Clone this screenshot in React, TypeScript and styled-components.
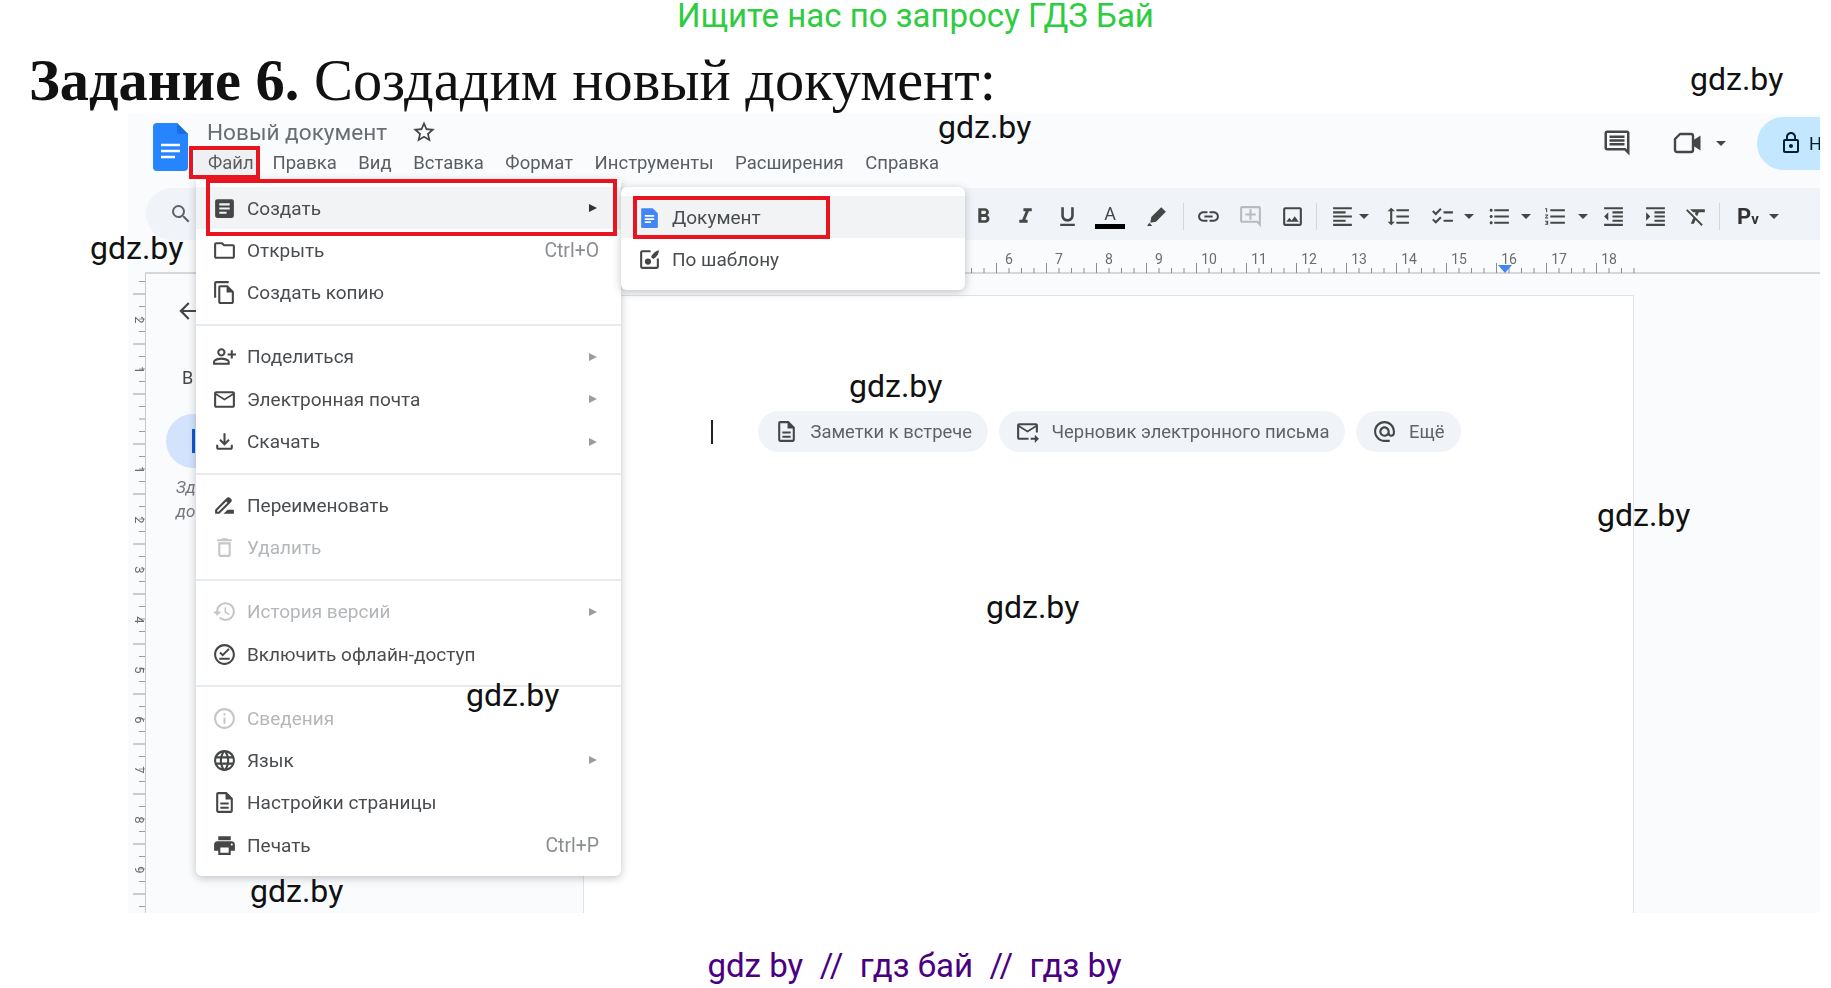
import { ReactNode } from "react";
import styled, { createGlobalStyle } from "styled-components";
import {
  MdAlternateEmail,
  MdArrowBack,
  MdArticle,
  MdChecklist,
  MdDriveFileRenameOutline,
  MdFormatAlignLeft,
  MdFormatBold,
  MdFormatClear,
  MdFormatIndentDecrease,
  MdFormatIndentIncrease,
  MdFormatItalic,
  MdFormatLineSpacing,
  MdFormatListBulleted,
  MdFormatListNumbered,
  MdFormatUnderlined,
  MdHistory,
  MdInfoOutline,
  MdLanguage,
  MdLink,
  MdLockOutline,
  MdOutlineAddComment,
  MdOutlineComment,
  MdOutlineDelete,
  MdOutlineDescription,
  MdOutlineEmail,
  MdOutlineFileCopy,
  MdOutlineFileDownload,
  MdOutlineFolder,
  MdOutlineForwardToInbox,
  MdOutlineImage,
  MdOutlineOfflinePin,
  MdOutlinePersonAddAlt,
  MdPrint,
  MdSearch,
  MdStarBorder,
} from "react-icons/md";

const Global = createGlobalStyle`
  html, body {
    margin: 0;
    padding: 0;
    background: #fff;
    font-family: Roboto, "Liberation Sans", sans-serif;
  }
`;

const Sheet = styled.div`
  position: relative;
  width: 1831px;
  height: 988px;
  overflow: hidden;
  display: flex;
  flex-direction: column;
`;

const Banner = styled.div`
  height: 32px;
  line-height: 32px;
  text-align: center;
  font-size: 33px;
  color: #2ecc40;
`;

const Heading = styled.h1`
  margin: 0;
  height: 82px;
  padding: 18px 0 0 29px;
  box-sizing: border-box;
  font: 400 58.4px/62px "Liberation Serif", serif;
  color: #111;
  white-space: nowrap;
  b {
    font-weight: 700;
  }
`;

const Footer = styled.div`
  margin-top: 35px;
  padding-right: 2px;
  line-height: 36px;
  font-size: 33.1px;
  text-align: center;
  color: #4b0082;
  white-space: pre;
`;

const Mark = styled.div<{ $x: number; $y: number }>`
  position: absolute;
  left: ${({ $x }) => $x}px;
  top: ${({ $y }) => $y - 19}px;
  font-size: 32px;
  line-height: 38px;
  color: #111;
`;

const Shot = styled.div`
  position: relative;
  margin-left: 128px;
  width: 1692px;
  height: 799px;
  flex: none;
  overflow: hidden;
  background: #f9fbfd;
  color: #444746;
  filter: blur(0.45px);
`;

const TitleBar = styled.div`
  height: 74px;
  display: flex;
  padding-left: 25px;
`;

const DocsLogo = styled.svg`
  width: 35px;
  height: 48px;
  margin: 9px 19px 0 0;
  flex: none;
`;

const TitleColumn = styled.div`
  display: flex;
  flex-direction: column;
  padding-top: 5px;
`;

const TitleRow = styled.div`
  display: flex;
  align-items: center;
  height: 26px;
  font-size: 22.6px;
  color: #6a6e72;
  gap: 24px;
  svg {
    font-size: 26px;
    color: #444746;
  }
`;

const MenuBar = styled.div`
  display: flex;
  gap: 21.5px;
  margin-top: 5px;
  font-size: 18.5px;
  line-height: 26px;
  color: #5a5e62;
`;

const HiddenTab = styled.span`
  width: 44px;
`;

const TitleActions = styled.div`
  margin-left: auto;
  display: flex;
  align-items: center;
  align-self: flex-start;
  height: 58px;
  font-size: 30px;
  color: #444746;
  svg {
    flex: none;
  }
`;

const ActionIcon = styled.div<{ $mr: number }>`
  display: flex;
  margin-right: ${({ $mr }) => $mr}px;
`;

const SharePill = styled.div`
  width: 120px;
  height: 53px;
  margin-left: 29px;
  margin-right: -57px;
  border-radius: 27px;
  background: #c2e7ff;
  display: flex;
  align-items: center;
  padding-left: 22px;
  box-sizing: border-box;
  gap: 6px;
  font-size: 18px;
  color: #001d35;
  svg {
    font-size: 24px;
  }
`;

const Toolbar = styled.div`
  height: 52px;
  margin-left: 18px;
  padding: 0 39px 0 23px;
  border-radius: 26px 0 0 26px;
  background: #f0f4f9;
  display: flex;
  align-items: center;
`;

const SearchGlyph = styled(MdSearch)`
  font-size: 24px;
  color: #5f6368;
`;

const ToolSet = styled.div`
  margin-left: auto;
  padding-top: 4px;
  display: flex;
  align-items: center;
`;

const Tool = styled.div<{ $w: number; $ml?: number; $faded?: boolean }>`
  width: ${({ $w }) => $w}px;
  margin-left: ${({ $ml }) => $ml ?? 0}px;
  display: flex;
  justify-content: center;
  font-size: 25px;
  color: ${({ $faded }) => ($faded ? "#b8bbbe" : "#444746")};
`;

const ToolSep = styled.div`
  width: 1px;
  height: 27px;
  background: #d5d8db;
  margin: 0 3px;
`;

const Caret = styled.div`
  width: 14px;
  display: flex;
  justify-content: center;
  &::after {
    content: "";
    border-left: 5px solid transparent;
    border-right: 5px solid transparent;
    border-top: 5px solid #444746;
  }
`;

const ColorA = styled.div`
  width: 30px;
  display: flex;
  flex-direction: column;
  align-items: center;
  font-size: 18px;
  line-height: 20px;
  color: #444746;
  &::after {
    content: "";
    width: 30px;
    height: 5px;
    background: #000;
  }
`;

const PvText = styled.div`
  font-size: 22px;
  font-weight: 700;
  color: #333;
  small {
    font-size: 15px;
  }
`;

const RulerSvg = styled.svg`
  display: block;
  width: 1692px;
  height: 34px;
`;

const Workspace = styled.div`
  display: flex;
  height: 639px;
`;

const VRulerSvg = styled.svg`
  width: 17px;
  height: 639px;
  flex: none;
  overflow: visible;
`;

const SidePanel = styled.div`
  width: 438px;
  flex: none;
  box-sizing: border-box;
  border-left: 1px solid #c8cbce;
  padding: 24px 0 0 20px;
  color: #444746;
`;

const BackIcon = styled(MdArrowBack)`
  font-size: 26px;
  display: block;
  margin-left: 9px;
`;

const TabsLabel = styled.div`
  margin: 42px 0 0 16px;
  font-size: 18px;
  line-height: 24px;
`;

const TabPill = styled.div`
  width: 300px;
  height: 54px;
  margin-top: 24px;
  border-radius: 27px;
  background: #d3e3fd;
  display: flex;
  align-items: center;
  padding-left: 26px;
  box-sizing: border-box;
  &::before {
    content: "";
    width: 3px;
    height: 24px;
    background: #0b57d0;
  }
`;

const EmptyHint = styled.div`
  margin: 7px 0 0 10px;
  font-size: 17px;
  font-style: italic;
  line-height: 24px;
  color: #75787c;
`;

const DocPage = styled.div`
  width: 1051px;
  margin-top: 21px;
  box-sizing: border-box;
  background: #fff;
  border: 1px solid #e0e2e4;
  border-bottom: none;
  padding: 115px 0 0 127px;
`;

const TemplateRow = styled.div`
  display: flex;
  align-items: center;
`;

const Cursor = styled.div`
  width: 2px;
  height: 24px;
  background: #222;
  margin-right: 45px;
`;

const Chip = styled.div`
  height: 41px;
  margin-right: 11px;
  padding: 0 16px 0 16px;
  border-radius: 21px;
  background: #f0f4f9;
  display: flex;
  align-items: center;
  gap: 11.5px;
  font-size: 18.4px;
  color: #5f6368;
  svg {
    font-size: 25px;
    color: #444746;
  }
`;

const FileMenu = styled.div`
  position: absolute;
  left: 68px;
  top: 66px;
  width: 425px;
  box-sizing: border-box;
  padding: 7px 0 10px;
  background: #fff;
  border-radius: 0 0 6px 6px;
  box-shadow: 0 2px 8px rgba(60, 64, 67, 0.3);
`;

const SubMenu = styled.div`
  position: absolute;
  left: 493px;
  top: 73px;
  width: 344px;
  box-sizing: border-box;
  padding: 9px 0;
  background: #fff;
  border-radius: 6px;
  box-shadow: 0 2px 8px rgba(60, 64, 67, 0.3);
`;

const Row = styled.div<{ $hot?: boolean; $off?: boolean }>`
  height: 42.4px;
  padding: 0 22px 0 16px;
  display: flex;
  align-items: center;
  gap: 10px;
  font-size: 19px;
  background: ${({ $hot }) => ($hot ? "#f1f3f4" : "transparent")};
  color: ${({ $off }) => ($off ? "#b4b7ba" : "#4a4d50")};
  svg {
    font-size: 25px;
    flex: none;
    color: ${({ $off }) => ($off ? "#c4c7c9" : "#444746")};
  }
`;

const RowLabel = styled.span`
  flex: 1;
`;

const Shortcut = styled.span`
  color: #8a8d90;
  font-size: 19.4px;
`;

const SubArrow = styled.span<{ $dark?: boolean }>`
  margin-right: 2px;
  border-top: 4.5px solid transparent;
  border-bottom: 4.5px solid transparent;
  border-left: 8px solid ${({ $dark }) => ($dark ? "#333" : "#9a9da0")};
`;

const Divider = styled.div`
  height: 21.5px;
  display: flex;
  align-items: center;
  &::after {
    content: "";
    width: 100%;
    height: 2px;
    background: #e9eaeb;
  }
`;

const RedBox = styled.div<{ $x: number; $y: number; $w: number; $h: number }>`
  position: absolute;
  left: ${({ $x }) => $x}px;
  top: ${({ $y }) => $y}px;
  width: ${({ $w }) => $w}px;
  height: ${({ $h }) => $h}px;
  box-sizing: border-box;
  border: 4.5px solid #e8141f;
`;

const FileTab = styled.div`
  position: absolute;
  left: 67px;
  top: 37px;
  width: 61px;
  height: 24px;
  background: #eef0f1;
  padding-left: 13px;
  box-sizing: border-box;
  font-size: 18.5px;
  line-height: 25px;
  color: #5a5e62;
`;

const marks = [
  [1690, 79],
  [938, 127],
  [90, 248],
  [849, 386],
  [1597, 515],
  [986, 607],
  [466, 695],
  [250, 891],
];

const menuItems = ["Правка", "Вид", "Вставка", "Формат", "Инструменты", "Расширения", "Справка"];

const DocsMark = () => (
  <svg width="1em" height="1em" viewBox="0 0 24 24">
    <path d="M5 3h10l5 5v13a1 1 0 0 1-1 1H5a1 1 0 0 1-1-1V4a1 1 0 0 1 1-1z" fill="#4285f4" />
    <path d="M7.5 10.5h9M7.5 13.5h9M7.5 16.5h6" stroke="#fff" strokeWidth="1.6" />
  </svg>
);

const TemplateIcon = () => (
  <svg viewBox="0 0 24 24" width="1em" height="1em" fill="none">
    <path d="M13 4H5a1 1 0 0 0-1 1v14a1 1 0 0 0 1 1h14a1 1 0 0 0 1-1v-8" stroke="currentColor" strokeWidth="2" />
    <path d="M21 3c-3 .5-6 3-7.5 6.5l2 2C19 10 21 6.5 21 3z" fill="currentColor" />
    <circle cx="10.5" cy="14" r="3" fill="currentColor" />
  </svg>
);

const MeetIcon = () => (
  <svg width="32" height="30" viewBox="0 0 32 30" fill="none">
    <path d="M8 6h11a2 2 0 0 1 2 2v14a2 2 0 0 1-2 2H5a2 2 0 0 1-2-2V11z" stroke="#444746" strokeWidth="2.4" strokeLinejoin="round" />
    <path d="M21.5 12l7-4.5v15l-7-4.5z" fill="#444746" />
  </svg>
);

const HRuler = () => {
  const unit = 50;
  const zero = 881 - 6 * unit;
  const end = 1506;
  const ticks: ReactNode[] = [];
  for (let i = 0; i < 88; i++) {
    const x = zero + (i * unit) / 4 + unit / 2;
    if (x > end + 1 || x < 18) continue;
    const h = i % 4 === 1 ? 10 : 5;
    ticks.push(<line key={i} x1={x} x2={x} y1={33 - h} y2={33} stroke="#8a8d90" strokeWidth="1" />);
  }
  const labels = [];
  for (let n = 6; n <= 18; n++) {
    labels.push(
      <text key={n} x={zero + n * unit} y={24} textAnchor="middle" fontSize="14" fill="#6a6d70" fontFamily="Roboto, sans-serif">
        {n}
      </text>
    );
  }
  return (
    <RulerSvg viewBox="0 0 1692 34">
      <line x1={17} x2={1692} y1={33} y2={33} stroke="#c8cbce" strokeWidth="1.5" />
      {ticks}
      {labels}
      <path d="M1370 25h14l-7 8z" fill="#4285f4" />
    </RulerSvg>
  );
};

const VRuler = () => {
  const ticks: ReactNode[] = [];
  for (let i = 0; i < 52; i++) {
    const y = 7.5 + i * 12.5;
    ticks.push(<line key={i} x1={i % 4 === 1 ? 5 : 11} x2={17} y1={y} y2={y} stroke="#9a9da0" strokeWidth="1" />);
  }
  const labels = [
    [2, 46],
    [1, 96],
    [1, 196],
    [2, 246],
    [3, 296],
    [4, 346],
    [5, 396],
    [6, 446],
    [7, 496],
    [8, 546],
    [9, 596],
  ];
  return (
    <VRulerSvg viewBox="0 0 17 639">
      {ticks}
      {labels.map(([n, y]) => (
        <text key={y} transform={`translate(7 ${y}) rotate(90)`} textAnchor="middle" fontSize="13" fill="#6a6d70" fontFamily="Roboto, sans-serif">
          {n}
        </text>
      ))}
    </VRulerSvg>
  );
};

const MenuRow = ({
  icon,
  label,
  keys,
  more,
  off,
  hot,
}: {
  icon: ReactNode;
  label: string;
  keys?: string;
  more?: boolean;
  off?: boolean;
  hot?: boolean;
}) => (
  <Row $off={off} $hot={hot}>
    {icon}
    <RowLabel>{label}</RowLabel>
    {keys && <Shortcut>{keys}</Shortcut>}
    {more && <SubArrow $dark={hot} />}
  </Row>
);

export default function App() {
  return (
    <Sheet>
      <Global />
      <Banner>Ищите нас по запросу ГДЗ Бай</Banner>
      <Heading>
        <b>Задание 6.</b> Создадим новый документ:
      </Heading>
      <Shot>
        <TitleBar>
          <DocsLogo viewBox="0 0 35 48">
            <path d="M4 0h20l11 11v33a4 4 0 0 1-4 4H4a4 4 0 0 1-4-4V4a4 4 0 0 1 4-4z" fill="#2684fc" />
            <path d="M24 0l11 11H26a2 2 0 0 1-2-2z" fill="#1a6fe0" />
            <path d="M8 22h19M8 28h19M8 34h14" stroke="#fff" strokeWidth="2.6" />
          </DocsLogo>
          <TitleColumn>
            <TitleRow>
              Новый документ
              <MdStarBorder />
            </TitleRow>
            <MenuBar>
              <HiddenTab />
              {menuItems.map((m) => (
                <span key={m}>{m}</span>
              ))}
            </MenuBar>
          </TitleColumn>
          <TitleActions>
            <ActionIcon $mr={40}>
              <MdOutlineComment />
            </ActionIcon>
            <ActionIcon $mr={10}>
              <MeetIcon />
            </ActionIcon>
            <Caret />
            <SharePill>
              <MdLockOutline />Н
            </SharePill>
          </TitleActions>
        </TitleBar>
        <Toolbar>
          <SearchGlyph />
          <ToolSet>
            <Tool $w={42}><MdFormatBold /></Tool>
            <Tool $w={42}><MdFormatItalic /></Tool>
            <Tool $w={42}><MdFormatUnderlined /></Tool>
            <Tool $w={44}><ColorA>A</ColorA></Tool>
            <Tool $w={48}>
              <svg width="25" height="25" viewBox="0 0 24 24">
                <path d="M16.5 3l4.5 4.5-9.5 9.5-5.5 1 1-5.5z" fill="#444746" />
                <path d="M5 18l-2 3h5z" fill="#444746" />
              </svg>
            </Tool>
            <ToolSep />
            <Tool $w={42}><MdLink /></Tool>
            <Tool $w={42} $faded><MdOutlineAddComment /></Tool>
            <Tool $w={42}><MdOutlineImage /></Tool>
            <ToolSep />
            <Tool $w={30} $ml={7}><MdFormatAlignLeft /></Tool>
            <Caret />
            <Tool $w={42} $ml={6}><MdFormatLineSpacing /></Tool>
            <Tool $w={40} $ml={3}><MdChecklist /></Tool>
            <Caret />
            <Tool $w={40} $ml={3}><MdFormatListBulleted /></Tool>
            <Caret />
            <Tool $w={42} $ml={1}><MdFormatListNumbered /></Tool>
            <Caret />
            <Tool $w={42} $ml={2}><MdFormatIndentDecrease /></Tool>
            <Tool $w={42}><MdFormatIndentIncrease /></Tool>
            <Tool $w={40}><MdFormatClear /></Tool>
            <ToolSep />
            <Tool $w={38} $ml={6}><PvText>P<small>v</small></PvText></Tool>
            <Caret />
          </ToolSet>
        </Toolbar>
        <HRuler />
        <Workspace>
          <VRuler />
          <SidePanel>
            <BackIcon />
            <TabsLabel>В</TabsLabel>
            <TabPill />
            <EmptyHint>
              Зд
              <br />
              до
            </EmptyHint>
          </SidePanel>
          <DocPage>
            <TemplateRow>
              <Cursor />
              <Chip>
                <MdOutlineDescription />
                Заметки к встрече
              </Chip>
              <Chip>
                <MdOutlineForwardToInbox />
                Черновик электронного письма
              </Chip>
              <Chip>
                <MdAlternateEmail />
                Ещё
              </Chip>
            </TemplateRow>
          </DocPage>
        </Workspace>

        <FileMenu>
          <MenuRow hot icon={<MdArticle />} label="Создать" more />
          <MenuRow icon={<MdOutlineFolder />} label="Открыть" keys="Ctrl+O" />
          <MenuRow icon={<MdOutlineFileCopy />} label="Создать копию" />
          <Divider />
          <MenuRow icon={<MdOutlinePersonAddAlt />} label="Поделиться" more />
          <MenuRow icon={<MdOutlineEmail />} label="Электронная почта" more />
          <MenuRow icon={<MdOutlineFileDownload />} label="Скачать" more />
          <Divider />
          <MenuRow icon={<MdDriveFileRenameOutline />} label="Переименовать" />
          <MenuRow off icon={<MdOutlineDelete />} label="Удалить" />
          <Divider />
          <MenuRow off icon={<MdHistory />} label="История версий" more />
          <MenuRow icon={<MdOutlineOfflinePin />} label="Включить офлайн-доступ" />
          <Divider />
          <MenuRow off icon={<MdInfoOutline />} label="Сведения" />
          <MenuRow icon={<MdLanguage />} label="Язык" more />
          <MenuRow icon={<MdOutlineDescription />} label="Настройки страницы" />
          <MenuRow icon={<MdPrint />} label="Печать" keys="Ctrl+P" />
        </FileMenu>

        <SubMenu>
          <MenuRow hot icon={<DocsMark />} label="Документ" />
          <MenuRow icon={<TemplateIcon />} label="По шаблону" />
        </SubMenu>

        <FileTab>Файл</FileTab>
        <RedBox $x={61} $y={32} $w={71} $h={33} />
        <RedBox $x={78} $y={65} $w={411} $h={57} />
        <RedBox $x={505} $y={82} $w={197} $h={43} />
      </Shot>
      <Footer>gdz by  //  гдз бай  //  гдз by</Footer>
      {marks.map(([x, y]) => (
        <Mark key={x} $x={x} $y={y}>
          gdz.by
        </Mark>
      ))}
    </Sheet>
  );
}
